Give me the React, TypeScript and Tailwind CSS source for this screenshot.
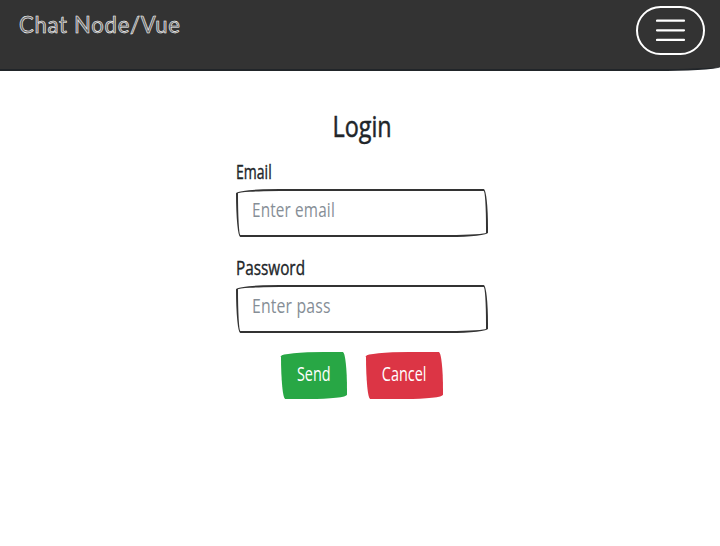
import type { ReactNode } from "react";

const sketch =
  "rounded-[255px_25px_225px_25px/25px_225px_25px_255px]";

function Field({ label, type, placeholder, labelScale, inputScale }: {
  label: string; type: string; placeholder: string; labelScale: string; inputScale: string;
}) {
  return (
    <div className="mb-4 h-20">
      <label className="flex h-6 items-start text-[19.5px] leading-[22px] font-medium [-webkit-text-stroke:0.4px_#212529]">
        <span className={`origin-left whitespace-nowrap ${labelScale}`}>{label}</span>
      </label>
      <div className={`mt-1 flex h-12 w-[252px] overflow-hidden border-2 border-[#333] bg-white pl-3.5 ${sketch}`}>
        <input
          type={type}
          placeholder={placeholder}
          className={`h-[37px] w-[260px] shrink-0 origin-left bg-transparent text-[19.5px] tracking-[0.2px] outline-none placeholder:text-[#868e96] placeholder:opacity-100 ${inputScale}`}
        />
      </div>
    </div>
  );
}

function Button({ className, scale, children }: { className: string; scale: string; children: ReactNode }) {
  return (
    <button className={`flex h-[47px] justify-center pt-[8px] text-[19.5px] leading-[27px] text-white ${sketch} ${className}`}>
      <span className={`whitespace-nowrap ${scale}`}>{children}</span>
    </button>
  );
}

export default function App() {
  return (
    <div className="min-h-[546px] overflow-hidden bg-white font-['Open_Sans','Noto_Sans',sans-serif] text-[#212529]">
      <nav className="-mx-[2px] flex h-[71px] items-start justify-between rounded-[0_0_55px_0/0_0_5px_0] border-b-2 border-[#212529] bg-[#333] pr-[17px] pl-[21px]">
        <a href="#" className="mt-[7px] origin-left scale-x-[0.96] font-['Lato',sans-serif] text-[23px] leading-[34px] tracking-[0.75px] whitespace-nowrap text-[#666] [-webkit-text-stroke:0.6px_#fff]">
          Chat Node/Vue
        </a>
        <button aria-label="Menu" className="mt-1.5 flex h-[49px] w-[69px] items-center justify-center rounded-[25px] border-2 border-white">
          <svg width="30" height="30" viewBox="0 0 30 30" fill="none" stroke="#fff" strokeWidth="2.2" strokeLinecap="round">
            <path d="M1 4.7h27M1 14.3h27M1 23.9h27" />
          </svg>
        </button>
      </nav>
      <main className="mx-auto mt-[37px] w-[252px] translate-x-[2px]">
        <h1 className="mb-[15px] flex h-[38px] justify-center text-[28.5px] leading-[37px] font-medium [-webkit-text-stroke:0.5px_#212529]">
          <span className="scale-x-[0.82]">Login</span>
        </h1>
        <Field label="Email" type="email" placeholder="Enter email" labelScale="scale-x-[0.72]" inputScale="scale-x-[0.785]" />
        <Field label="Password" type="password" placeholder="Enter pass" labelScale="scale-x-[0.785]" inputScale="scale-x-[0.81]" />
        <div className="mt-[-1px] flex justify-center gap-[19px]">
          <Button className="w-[66px] bg-[#28a745]" scale="scale-x-[0.74]">Send</Button>
          <Button className="w-[77px] bg-[#dc3545]" scale="scale-x-[0.74]">Cancel</Button>
        </div>
      </main>
    </div>
  );
}
